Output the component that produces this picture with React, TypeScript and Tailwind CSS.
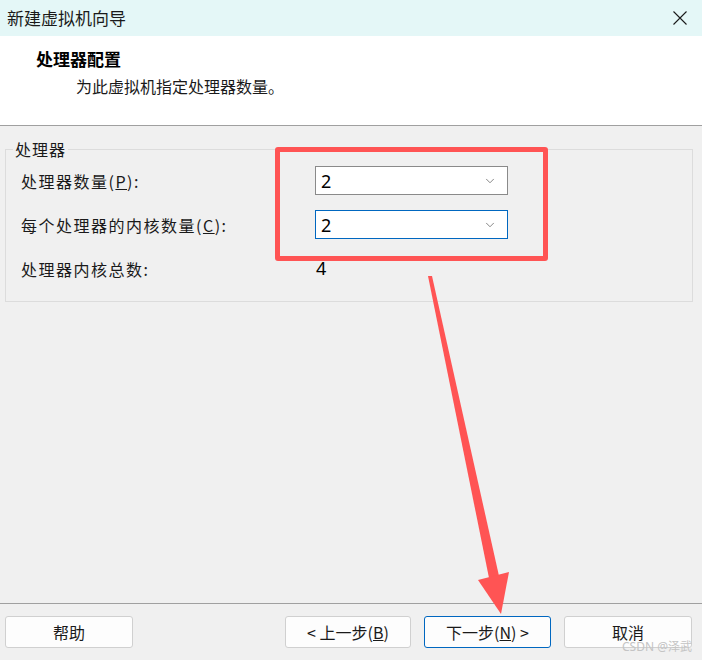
import { ChevronDown } from 'lucide-react';

const cjk = { fontFamily: '"Noto Sans CJK SC", "Noto Sans", sans-serif' };

function Select({ value, focused }: { value: string; focused?: boolean }) {
  return (
    <div
      className={`flex h-[29px] w-[193px] items-center justify-between bg-white pl-[5px] pr-[10px] border ${
        focused ? 'border-[#0067c0]' : 'border-[#8a8a8a]'
      }`}
    >
      <span className="text-[18px] leading-none text-black" style={{ fontFamily: '"Noto Sans", sans-serif' }}>
        {value}
      </span>
      <ChevronDown className="h-[14px] w-[14px] text-[#606060]" strokeWidth={1.3} />
    </div>
  );
}

function Row({ label, children }: { label: React.ReactNode; children: React.ReactNode }) {
  return (
    <div className="flex h-[29px] items-center">
      <div className="w-[309px] pl-[15px] text-[16px] tracking-[1.5px] text-[#1a1a1a]">{label}</div>
      {children}
    </div>
  );
}

function Button({ children, primary, serif, w }: { children: React.ReactNode; primary?: boolean; serif?: boolean; w: string }) {
  return (
    <button
      className={`flex h-[32px] items-center justify-center rounded-[3px] bg-[#fdfdfd] text-[16px] text-[#1a1a1a] border ${w} ${
        primary ? 'border-[#0067c0]' : 'border-[#d0d0d0]'
      }`}
      style={serif ? { fontFamily: '"Noto Sans CJK SC", serif' } : undefined}
    >
      {children}
    </button>
  );
}

export default function App() {
  return (
    <div className="relative flex h-[660px] w-[702px] flex-col overflow-hidden bg-[#f0f0f0]" style={cjk}>
      {/* title bar */}
      <div className="flex h-[36px] shrink-0 items-center justify-between bg-[#e4f7f7] pl-[7px] pr-[14px]">
        <span className="text-[17px] text-[#1a1a1a]">新建虚拟机向导</span>
        <svg width="16" height="16" viewBox="0 0 16 16" className="text-[#1a1a1a]">
          <path d="M1.5 1.5 L14.5 14.5 M14.5 1.5 L1.5 14.5" stroke="currentColor" strokeWidth="1.1" fill="none" />
        </svg>
      </div>

      {/* header */}
      <div className="flex h-[90px] shrink-0 flex-col border-b border-[#a0a0a0] bg-white pl-[36px] pt-[10px]">
        <div className="text-[17px] font-bold leading-[26px] text-black">处理器配置</div>
        <div className="pl-[40px] pt-[2px] text-[16px] leading-[24px] text-[#1a1a1a]">为此虚拟机指定处理器数量。</div>
      </div>

      {/* body */}
      <div className="flex flex-1 flex-col px-[5px] pt-[23px]">
        <div className="relative flex h-[153px] w-[688px] flex-col gap-[15px] border border-[#dcdcdc] pt-[16px]">
          <span className="absolute left-[7px] top-[-12px] bg-[#f0f0f0] px-[2px] text-[16px] leading-[22px] tracking-[1px] text-[#1a1a1a]">
            处理器
          </span>
          <Row label={<>处理器数量(<u>P</u>):</>}>
            <Select value="2" />
          </Row>
          <Row label={<>每个处理器的内核数量(<u>C</u>):</>}>
            <Select value="2" focused />
          </Row>
          <Row label="处理器内核总数:">
            <span className="pl-[1px] text-[18px] text-black" style={{ fontFamily: '"Noto Sans", sans-serif' }}>
              4
            </span>
          </Row>
        </div>
      </div>

      {/* footer */}
      <div className="flex h-[57px] shrink-0 items-center justify-between border-t border-[#a0a0a0] pb-[7px] pl-[5px] pr-[10px] pt-[6px]">
        <Button serif w="w-[128px]">帮助</Button>
        <div className="flex gap-[13px]">
          <Button w="w-[126px]">
            &lt; 上一步(<u>B</u>)
          </Button>
          <Button primary w="w-[127px]">
            下一步(<u>N</u>) &gt;
          </Button>
          <Button serif w="w-[128px]">取消</Button>
        </div>
      </div>

      {/* annotation overlay */}
      <div className="pointer-events-none absolute left-[275px] top-[147px] h-[114px] w-[273px] rounded-[3px] border-[5px] border-[#ff5454]" />
      <svg className="pointer-events-none absolute left-0 top-0" width="702" height="660">
        <polygon points="428,276 432,276 499,576 489,578" fill="#ff5454" />
        <polygon points="478,580 509,572 501,614" fill="#ff5454" />
      </svg>
      <span
        className="absolute bottom-[7px] right-[10px] text-[12px] leading-none text-[#c4c4c4]"
        style={{ fontFamily: '"Noto Sans", "Noto Sans CJK SC", sans-serif' }}
      >
        CSDN @泽武
      </span>
    </div>
  );
}
